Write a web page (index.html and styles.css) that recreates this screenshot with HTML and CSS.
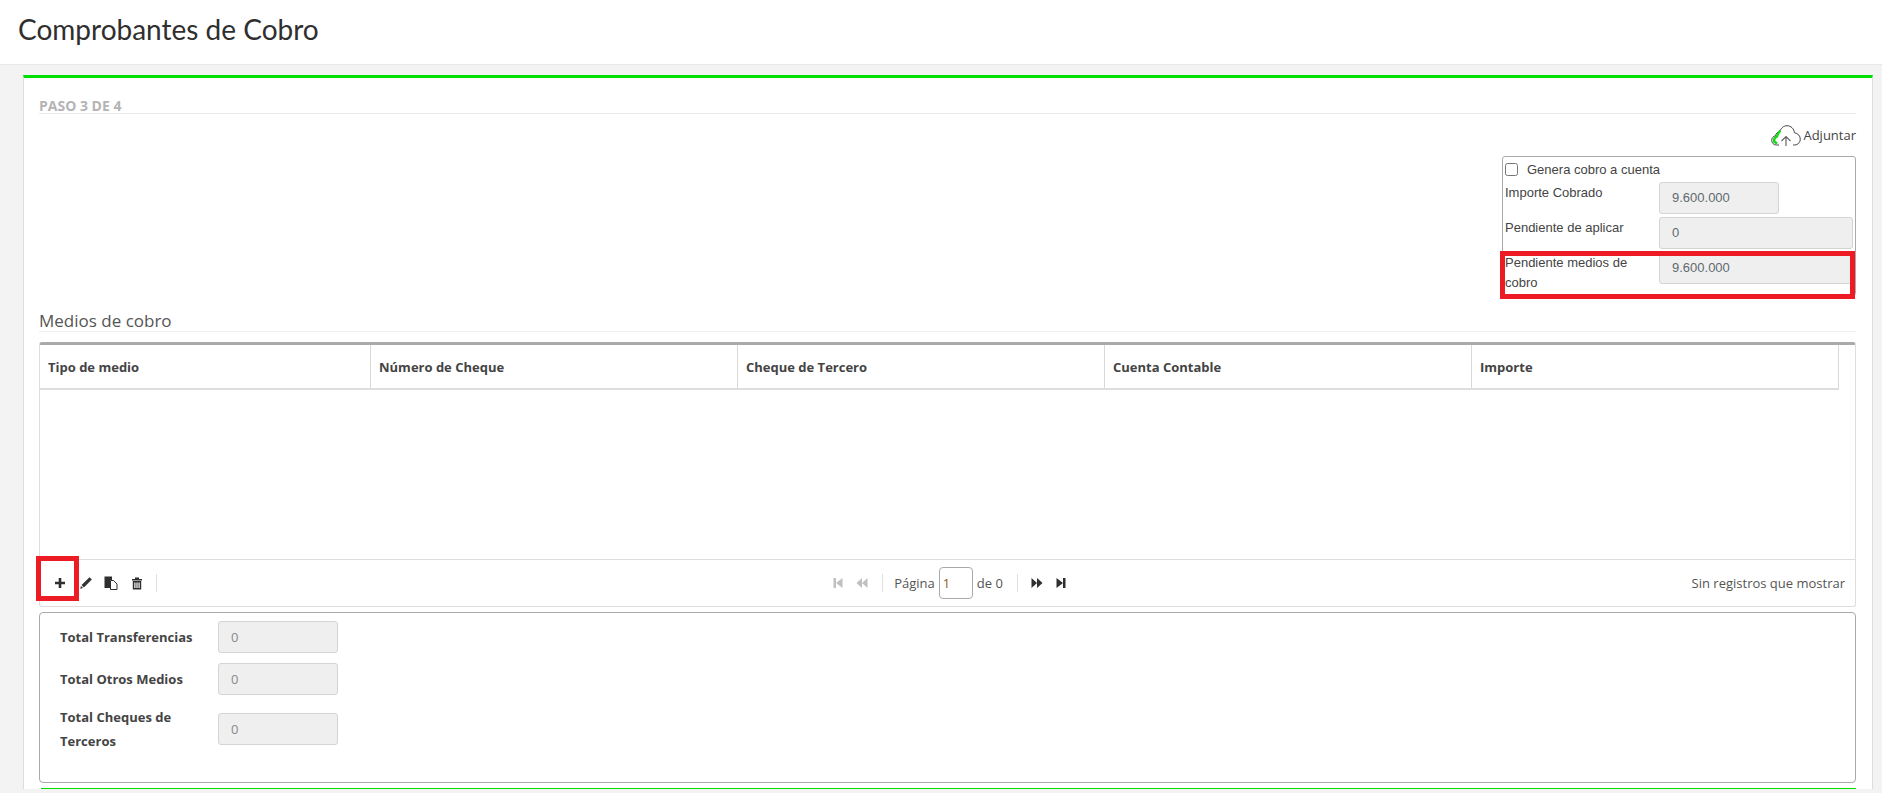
FILE: index.html
```html
<!DOCTYPE html>
<html lang="es">
<head>
    <meta charset="UTF-8">
    <title>Comprobantes de Cobro</title>
    <link rel="stylesheet" href="styles.css">
</head>
<body>
<div class="page-heading">
    <h2>Comprobantes de Cobro</h2>
</div>

<div class="wrapper">
    <div class="ibox">
        <h5 class="step-title">PASO 3 DE 4</h5>

        <div class="attach-row">
            <svg class="cloud" width="30" height="21" viewBox="0 0 30 21">
                <path d="M8 20H5.500C2.500 20 0.700 17.800 0.700 15.300C0.700 13 2.300 11.200 4.500 10.800C5 8.500 6.500 7 8.500 6.800C10 3 12.800 0.700 16 0.700C20 0.700 23 3.800 23.500 7.800C26.800 8.200 29.300 10.800 29.300 14.200C29.300 17.500 26.800 20 23.500 20H22" fill="none" stroke="#444" stroke-width="1"/>
                <path d="M9.500 5.500C7.500 7.500 6.500 9.500 6 11.500C3.800 12.500 2.800 14.500 3.200 16.500L6 18.500" fill="none" stroke="#10dc10" stroke-width="2.400"/>
                <path d="M15 21V11.500M10.500 16L15 11.500L19.500 16" fill="none" stroke="#666" stroke-width="1.200"/>
            </svg>
            <span class="attach-label">Adjuntar</span>
        </div>

        <div class="summary-row">
            <div class="summary-box">
                <label class="check-row"><input type="checkbox"><span>Genera cobro a cuenta</span></label>
                <div class="summary-field">
                    <span class="summary-label">Importe Cobrado</span>
                    <div class="ro-input short">9.600.000</div>
                </div>
                <div class="summary-field">
                    <span class="summary-label">Pendiente de aplicar</span>
                    <div class="ro-input">0</div>
                </div>
                <div class="summary-field">
                    <span class="summary-label">Pendiente medios de cobro</span>
                    <div class="ro-input">9.600.000</div>
                </div>
                <div class="red-mark mark-pending"></div>
            </div>
        </div>

        <h4 class="section-title">Medios de cobro</h4>

        <div class="grid">
            <div class="grid-cols">
                <div class="col">Tipo de medio</div>
                <div class="col">Número de Cheque</div>
                <div class="col">Cheque de Tercero</div>
                <div class="col">Cuenta Contable</div>
                <div class="col">Importe</div>
            </div>
            <div class="grid-body"></div>
            <div class="pager">
                <div class="pager-left">
                    <button class="icon-btn" title="Agregar">
                        <svg width="12" height="12" viewBox="0 0 12 12"><path d="M4.700 1H7.300V4.700H11V7.300H7.300V11H4.700V7.300H1V4.700H4.700Z" fill="#2f2f2f"/></svg>
                    </button>
                    <button class="icon-btn" title="Editar">
                        <svg width="14" height="14" viewBox="0 0 12 12"><path d="M9 1L11 3L4.200 9.800L2.200 7.800ZM1.700 8.500L3.500 10.300L1 11Z" fill="#333"/></svg>
                    </button>
                    <button class="icon-btn" title="Copiar">
                        <svg width="14" height="14" viewBox="0 0 14 14"><path d="M0.500 0.500H8V4H6V12H0.500Z" fill="#2f2f2f"/><path d="M6.500 4.500H9.500L13 8V13.500H6.500Z" fill="#fff" stroke="#2f2f2f"/></svg>
                    </button>
                    <button class="icon-btn" title="Eliminar">
                        <svg width="12" height="13" viewBox="0 0 12 13"><path d="M1 2H4V0.500H8V2H11V3.500H1ZM1.800 4H10.200V12.500H1.800ZM3.300 5.500V11H4.500V5.500ZM5.400 5.500V11H6.600V5.500ZM7.500 5.500V11H8.700V5.500Z" fill="#2f2f2f" fill-rule="evenodd"/></svg>
                    </button>
                    <span class="pager-sep"></span>
                </div>
                <div class="pager-center">
                    <svg class="dim" width="10" height="12" viewBox="0 0 10 12"><path d="M0.500 1H3V11H0.500ZM9.500 1V11L3 6Z" fill="#333"/></svg>
                    <svg class="dim" width="12" height="12" viewBox="0 0 12 12"><path d="M6 1V11L0.500 6ZM11.500 1V11L6 6Z" fill="#333"/></svg>
                    <span class="pager-sep"></span>
                    <span>Página</span>
                    <input class="page-input" type="text" value="1">
                    <span>de 0</span>
                    <span class="pager-sep"></span>
                    <svg width="12" height="12" viewBox="0 0 12 12"><path d="M0.500 1L6 6L0.500 11ZM6 1L11.500 6L6 11Z" fill="#2f2f2f"/></svg>
                    <svg width="10" height="12" viewBox="0 0 10 12"><path d="M0.500 1L7 6L0.500 11ZM7 1H9.500V11H7Z" fill="#2f2f2f"/></svg>
                </div>
                <div class="pager-right">Sin registros que mostrar</div>
                <div class="red-mark mark-add"></div>
            </div>
        </div>

        <div class="totals">
            <div class="total-row">
                <span class="total-label">Total Transferencias</span>
                <div class="ro-input short">0</div>
            </div>
            <div class="total-row">
                <span class="total-label">Total Otros Medios</span>
                <div class="ro-input short">0</div>
            </div>
            <div class="total-row">
                <span class="total-label">Total Cheques de Terceros</span>
                <div class="ro-input short">0</div>
            </div>
        </div>

        <div class="next-line"></div>
    </div>
</div>
</body>
</html>
```

FILE: styles.css
```css
* {
    margin: 0;
    padding: 0;
    box-sizing: border-box;
}
html, body {
    height: 793px;
    overflow: hidden;
}
body {
    font-family: 'Open Sans', sans-serif;
    background-color: #f3f3f4;
    color: #676a6c;
    font-size: 13px;
}
.page-heading {
    height: 65px;
    background: #ffffff;
    border-bottom: 1px solid #e7eaec;
    padding: 11px 18px 0;
}
.page-heading h2 {
    font-family: 'Lato', sans-serif;
    font-size: 28px;
    font-weight: 400;
    line-height: 36px;
    color: #2f2f2f;
}
.wrapper {
    padding: 10px 9px 0 23px;
}
.ibox {
    position: relative;
    height: 714px;
    background: #ffffff;
    border-top: 3px solid #00e000;
    border-left: 1px solid #dddddd;
    border-right: 1px solid #dddddd;
    padding: 20px 16px 0 15px;
}
.step-title {
    font-size: 14px;
    font-weight: 700;
    line-height: 15px;
    color: #b4b4b4;
    border-bottom: 1px solid #e7eaec;
}
.attach-row {
    display: flex;
    justify-content: flex-end;
    align-items: center;
    height: 22px;
    margin-top: 10px;
    gap: 2px;
}
.attach-label {
    font-size: 13px;
    color: #444;
}
.summary-row {
    display: flex;
    justify-content: flex-end;
    margin-top: 10px;
}
.summary-box {
    position: relative;
    width: 354px;
    height: 140px;
    border: 1px solid #aaaaaa;
    border-radius: 3px;
    padding: 3px 2px 0 2px;
    font-family: 'Liberation Sans', sans-serif;
    color: #444;
}
.check-row {
    display: flex;
    align-items: center;
    height: 18px;
    margin-bottom: 4px;
    font-size: 13px;
}
.check-row input {
    width: 13px;
    height: 13px;
    margin-right: 9px;
}
.summary-field {
    display: flex;
    height: 35px;
    font-size: 13px;
    line-height: 20px;
}
.summary-label {
    width: 154px;
    flex-shrink: 0;
    padding: 1px 20px 0 0;
}
.ro-input {
    width: 194px;
    height: 32px;
    background: #efefef;
    border: 1px solid #d4d4d4;
    border-radius: 3px;
    padding-left: 12px;
    line-height: 30px;
    font-family: 'Liberation Sans', sans-serif;
    font-size: 13px;
    color: #606a70;
}
.ro-input.short {
    width: 120px;
}
.section-title {
    font-size: 17px;
    font-weight: 400;
    line-height: 20px;
    color: #555;
    border-bottom: 1px solid #eeeeee;
    margin-top: 13px;
    padding-top: 2px;
    height: 23px;
}
.grid {
    margin-top: 10px;
    border: 1px solid #dddddd;
    border-top: 3px solid #aaaaaa;
    border-radius: 3px;
}
.grid-cols {
    display: flex;
    width: 1799px;
    height: 45px;
    border-bottom: 2px solid #dddddd;
}
.col {
    flex: none;
    width: 367px;
    border-right: 1px solid #d8d8d8;
    padding-left: 8px;
    font-size: 13px;
    font-weight: 700;
    line-height: 44px;
    color: #444;
}
.col:first-child {
    width: 331px;
}
.grid-body {
    height: 170px;
    border-bottom: 1px solid #dddddd;
}
.pager {
    position: relative;
    display: grid;
    grid-template-columns: 1fr auto 1fr;
    align-items: center;
    height: 46px;
    font-size: 13px;
}
.pager-left {
    display: flex;
    align-items: center;
    padding-left: 10px;
    gap: 5.5px;
}
.icon-btn {
    display: flex;
    align-items: center;
    justify-content: center;
    width: 20px;
    height: 20px;
    border: none;
    background: none;
}
.pager-sep {
    width: 1px;
    height: 18px;
    background: #e0e0e0;
    margin: 0 9px 0 10px;
}
.pager-left .pager-sep {
    margin: 0 0 0 4px;
}
.pager-center {
    display: flex;
    align-items: center;
    gap: 4px;
    padding-left: 4px;
    color: #555;
}
.pager-center .dim + .pager-sep {
    margin-right: 7px;
}
.pager-center svg + svg {
    margin-left: 9px;
}
.dim {
    opacity: 0.3;
}
.page-input {
    width: 34px;
    height: 32px;
    border: 1px solid #aaaaaa;
    border-radius: 4px;
    padding-left: 3px;
    font-family: 'Open Sans', sans-serif;
    font-size: 13px;
    color: #8a5a20;
}
.pager-right {
    text-align: right;
    padding-right: 10px;
    color: #555;
}
.totals {
    height: 171px;
    margin-top: 5px;
    border: 1px solid #aaaaaa;
    border-radius: 4px;
    padding: 8px 20px 0;
}
.totals .ro-input {
    font-family: 'Open Sans', sans-serif;
    color: #8a8a8a;
}
.total-row {
    display: flex;
    align-items: center;
    min-height: 32px;
    margin-bottom: 10px;
}
.total-label {
    width: 158px;
    font-size: 13px;
    font-weight: 700;
    line-height: 24px;
    color: #444;
}
.next-line {
    height: 1px;
    margin: 5px 0 0 2px;
    background: #00e000;
}
.red-mark {
    position: absolute;
    border: 5px solid #ed1c24;
}
.mark-pending {
    left: -3px;
    top: 94px;
    width: 355px;
    height: 48px;
}
.mark-add {
    left: -4px;
    top: -4px;
    width: 43px;
    height: 45px;
}
```
